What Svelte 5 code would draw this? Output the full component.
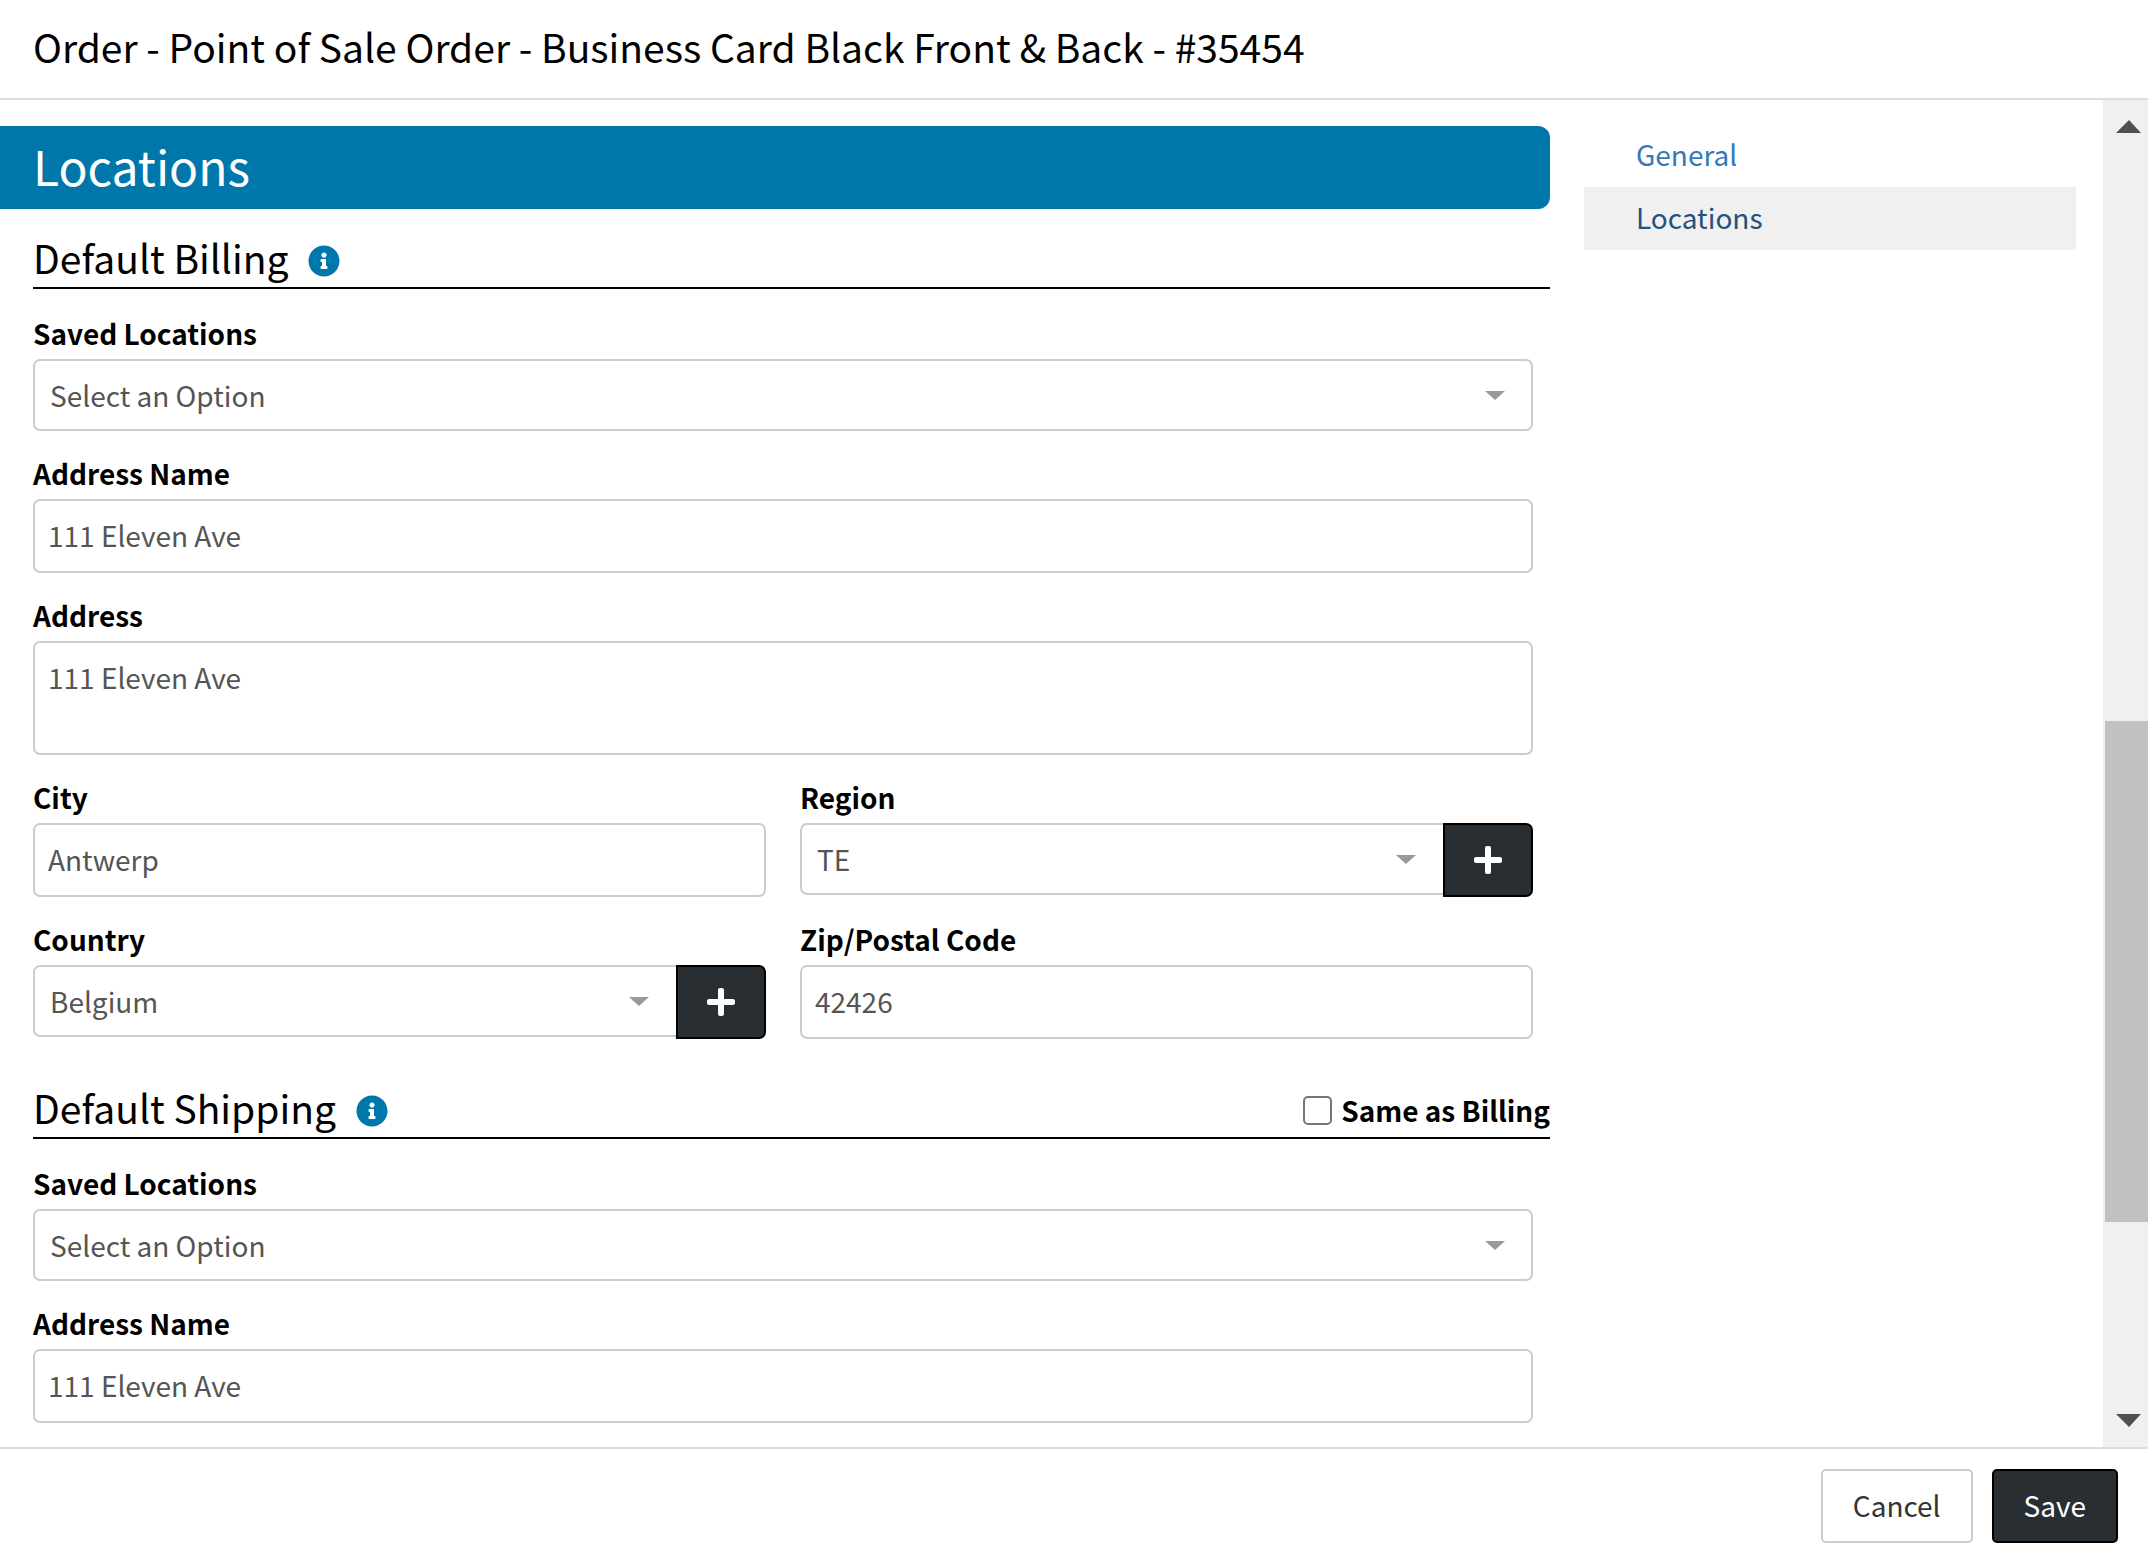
<script lang="ts">
	type Field = {
		id: string;
		label: string;
		kind: 'text' | 'area' | 'select';
		value: string;
		addable?: boolean;
		half?: boolean;
	};

	type Section = {
		id: string;
		title: string;
		copyLabel?: string;
		fields: Field[];
	};

	let title = 'Order - Point of Sale Order - Business Card Black Front & Back - #35454';
	let activeTab = $state('Locations');
	let sameAsBilling = $state(false);

	const tabs = ['General', 'Locations'];

	// scroll position of the body, as shares of the track
	const scroll = { before: 576, thumb: 501, after: 180 };

	let sections: Section[] = $state([
		{
			id: 'billing',
			title: 'Default Billing',
			fields: [
				{ id: 'saved', label: 'Saved Locations', kind: 'select', value: 'Select an Option' },
				{ id: 'name', label: 'Address Name', kind: 'text', value: '111 Eleven Ave' },
				{ id: 'address', label: 'Address', kind: 'area', value: '111 Eleven Ave' },
				{ id: 'city', label: 'City', kind: 'text', value: 'Antwerp', half: true },
				{ id: 'region', label: 'Region', kind: 'select', value: 'TE', half: true, addable: true },
				{ id: 'country', label: 'Country', kind: 'select', value: 'Belgium', half: true, addable: true },
				{ id: 'zip', label: 'Zip/Postal Code', kind: 'text', value: '42426', half: true }
			]
		},
		{
			id: 'shipping',
			title: 'Default Shipping',
			copyLabel: 'Same as Billing',
			fields: [
				{ id: 'saved', label: 'Saved Locations', kind: 'select', value: 'Select an Option' },
				{ id: 'name', label: 'Address Name', kind: 'text', value: '111 Eleven Ave' }
			]
		}
	]);
</script>

<div class="modal">
	<header class="modal-header">
		<h1>{title}</h1>
	</header>

	<div class="modal-body">
		<div class="content">
			<main>
				<h2 class="banner">Locations</h2>

				{#each sections as section}
					<section>
						<div class="section-head">
							<h3>{section.title}</h3>
							<svg class="info" viewBox="0 0 512 512" aria-hidden="true">
								<path
									d="M256 8C119.043 8 8 119.083 8 256c0 136.997 111.043 248 248 248s248-111.003 248-248C504 119.083 392.957 8 256 8zm0 110c23.196 0 42 18.804 42 42s-18.804 42-42 42-42-18.804-42-42 18.804-42 42-42zm56 254c0 6.627-5.373 12-12 12h-88c-6.627 0-12-5.373-12-12v-24c0-6.627 5.373-12 12-12h12v-64h-12c-6.627 0-12-5.373-12-12v-24c0-6.627 5.373-12 12-12h64c6.627 0 12 5.373 12 12v100h12c6.627 0 12 5.373 12 12v24z"
								/>
							</svg>
							{#if section.copyLabel}
								<label class="copy">
									<input type="checkbox" bind:checked={sameAsBilling} />
									{section.copyLabel}
								</label>
							{/if}
						</div>

						<div class="fields">
							{#each section.fields as field}
								<div class="field" class:half={field.half}>
									<label for="{section.id}-{field.id}">{field.label}</label>
									{#if field.kind === 'select'}
										<div class="group" class:addable={field.addable}>
											<div class="select-wrap">
												<select id="{section.id}-{field.id}" bind:value={field.value}>
													<option>{field.value}</option>
												</select>
											</div>
											{#if field.addable}
												<button class="add-btn" type="button" aria-label="Add {field.label}">
													<svg viewBox="0 0 448 512" aria-hidden="true">
														<path
															d="M416 208H272V64c0-17.67-14.33-32-32-32h-32c-17.67 0-32 14.33-32 32v144H32c-17.67 0-32 14.33-32 32v32c0 17.67 14.33 32 32 32h144v144c0 17.67 14.33 32 32 32h32c17.67 0 32-14.33 32-32V304h144c17.67 0 32-14.33 32-32v-32c0-17.67-14.33-32-32-32z"
														/>
													</svg>
												</button>
											{/if}
										</div>
									{:else if field.kind === 'area'}
										<textarea id="{section.id}-{field.id}" bind:value={field.value}></textarea>
									{:else}
										<input id="{section.id}-{field.id}" type="text" bind:value={field.value} />
									{/if}
								</div>
							{/each}
						</div>
					</section>
				{/each}
			</main>

			<nav>
				{#each tabs as tab}
					<a href="#{tab.toLowerCase()}" class:active={tab === activeTab} onclick={() => (activeTab = tab)}>{tab}</a>
				{/each}
			</nav>
		</div>

		<div class="scrollbar" aria-hidden="true">
			<svg class="arrow" viewBox="0 0 45 45"><path d="M26 20 13 33h25z" /></svg>
			<div style:flex-grow={scroll.before}></div>
			<div class="thumb" style:flex-grow={scroll.thumb}></div>
			<div style:flex-grow={scroll.after}></div>
			<svg class="arrow" viewBox="0 0 45 45"><path d="M13 12h25L26 25z" /></svg>
		</div>
	</div>

	<footer>
		<button class="btn" type="button">Cancel</button>
		<button class="btn dark" type="button">Save</button>
	</footer>
</div>

<style>
	:global(body) {
		background-color: #fff;
	}

	.modal {
		display: flex;
		flex-direction: column;
		height: 100vh;
		font-family: 'Noto Sans CJK SC', 'Noto Sans', sans-serif;
		font-size: 28px;
		color: #000;
	}

	.modal * {
		box-sizing: border-box;
	}

	.modal-header {
		padding: 19px 33px 25px;
		border-bottom: 2px solid #ddd;
		flex-shrink: 0;
	}

	h1,
	h2,
	h3 {
		margin: 0;
		font-weight: 400;
	}

	h1 {
		font-size: 39px;
		line-height: 54px;
	}

	.modal-body {
		display: flex;
		flex: 1;
		min-height: 0;
		overflow: hidden;
	}

	.content {
		flex: 1;
		display: grid;
		grid-template-columns: minmax(0, 1fr) 492px;
		gap: 34px;
		align-items: start;
		padding: 24px 27px 0 0;
	}

	.banner {
		margin-top: 2px;
		padding: 8px 33px 12px;
		border-radius: 0 12px 12px 0;
		background-color: #0077ab;
		color: #fff;
		font-size: 48px;
		line-height: 63px;
	}

	section {
		margin-left: 33px;
	}

	section + section {
		margin-top: 20px;
	}

	.section-head {
		display: flex;
		align-items: center;
		padding: 23px 0 5px;
		border-bottom: 2px solid #000;
		margin-bottom: 2px;
	}

	h3 {
		font-size: 39px;
		line-height: 50px;
	}

	.info {
		width: 32px;
		height: 32px;
		margin: 8px 0 0 20px;
		fill: #0077ab;
	}

	.copy {
		display: flex;
		align-items: center;
		gap: 9px;
		margin-left: auto;
		padding-top: 6px;
		font-weight: 700;
		line-height: 36px;
	}

	.copy input {
		appearance: none;
		width: 29px;
		height: 29px;
		margin: 0;
		border: 2px solid #767676;
		border-radius: 5px;
		background-color: #fff;
	}

	.copy input:checked {
		background-color: #0077ab;
	}

	.fields {
		display: grid;
		grid-template-columns: 1fr 1fr;
		column-gap: 34px;
		margin-right: 17px;
	}

	.field {
		grid-column: span 2;
		display: flex;
		flex-direction: column;
		padding-top: 24px;
	}

	.field.half {
		grid-column: span 1;
	}

	.field > label {
		padding-bottom: 8px;
		font-weight: 700;
		line-height: 36px;
	}

	input[type='text'],
	textarea,
	select {
		width: 100%;
		border: 2px solid #ccc;
		border-radius: 7px;
		background-color: #fff;
		color: #555;
		font-family: inherit;
		font-size: 28px;
		line-height: 40px;
		outline: none;
	}

	input[type='text'] {
		height: 74px;
		padding: 0 13px 2px;
	}

	textarea {
		display: block;
		height: 114px;
		padding: 14px 13px;
		resize: none;
	}

	select {
		appearance: none;
		display: block;
		height: 72px;
		padding: 0 60px 0 15px;
	}

	.group {
		display: flex;
		align-items: flex-start;
	}

	.select-wrap {
		position: relative;
		flex: 1;
	}

	.select-wrap::after {
		content: '';
		position: absolute;
		top: 32px;
		right: 28px;
		border: 10px solid transparent;
		border-top: 9px solid #999;
		border-bottom: 0;
		pointer-events: none;
	}

	.addable select {
		border-right: 0;
		border-radius: 7px 0 0 7px;
	}

	.addable .select-wrap::after {
		right: 27px;
	}

	.add-btn {
		display: flex;
		align-items: center;
		justify-content: center;
		width: 90px;
		height: 74px;
		padding: 0;
		border: 2px solid #000;
		border-radius: 0 7px 7px 0;
		background-color: #292e32;
		cursor: pointer;
	}

	.add-btn svg {
		width: 28px;
		height: 32px;
		fill: #fff;
	}

	nav {
		display: flex;
		flex-direction: column;
	}

	nav a {
		padding: 0 52px 3px;
		color: #337ab7;
		line-height: 60px;
		text-decoration: none;
	}

	nav a.active {
		background-color: #f0f0f0;
		color: #23527c;
	}

	.scrollbar {
		display: flex;
		flex-direction: column;
		width: 45px;
		background-color: #f0f0f0;
	}

	.arrow {
		width: 45px;
		height: 45px;
		fill: #505050;
	}

	.thumb {
		margin-left: 2px;
		background-color: #c1c1c1;
	}

	footer {
		display: flex;
		justify-content: flex-end;
		gap: 19px;
		padding: 20px 30px 11px;
		border-top: 2px solid #ddd;
		flex-shrink: 0;
	}

	.btn {
		height: 74px;
		padding: 0 30px 2px;
		border: 2px solid #ccc;
		border-radius: 5px;
		background-color: #fff;
		color: #333;
		font-family: inherit;
		font-size: 28px;
		line-height: 40px;
		cursor: pointer;
	}

	.btn.dark {
		border-color: #000;
		background-color: #292e32;
		color: #fff;
	}
</style>
